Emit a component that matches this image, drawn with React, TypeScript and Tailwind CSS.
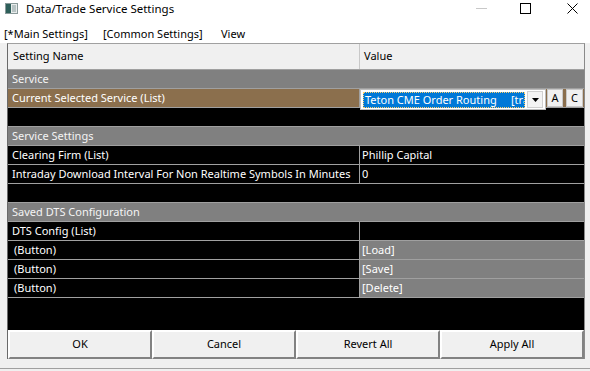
import React from "react";

const font = { fontFamily: '"Noto Sans", Lato, sans-serif' };

function Row({
  name,
  value,
  kind = "black",
  valueGray = false,
  indent = false,
  children,
}: {
  name?: string;
  value?: string;
  kind?: "black" | "section" | "brown" | "empty";
  valueGray?: boolean;
  indent?: boolean;
  children?: React.ReactNode;
}) {
  if (kind === "section") {
    return (
      <div className="h-[19px] bg-[#808080] border-b border-[#a0a0a0] text-[#f4f4f4] pl-[4px] leading-[18px]">
        {name}
      </div>
    );
  }
  if (kind === "empty") {
    return <div className="h-[19px] bg-black border-b border-[#a0a0a0]" />;
  }
  const bg = kind === "brown" ? "bg-[#8b6f4d]" : "bg-black";
  return (
    <div className={`relative h-[19px] flex border-b border-[#a0a0a0] ${bg} text-white leading-[18px]`}>
      <div className={`w-[352px] ${indent ? "pl-[6px]" : "pl-[4px]"} whitespace-nowrap overflow-hidden border-r border-[#a0a0a0]`}>{name}</div>
      <div className={`flex-1 pl-[2px] ${valueGray ? "bg-[#808080]" : ""}`}>{value}</div>
      {children}
    </div>
  );
}

function Btn({ label }: { label: string }) {
  return (
    <div className="flex-1 h-[29px] bg-[#f0f0f0] border-t-2 border-l-2 border-t-white border-l-white border-b-2 border-r-2 border-b-[#828282] border-r-[#828282] flex items-center justify-center text-black">
      {label}
    </div>
  );
}

export default function App() {
  return (
    <div className="w-[590px] h-[371px] bg-[#f0f0f0] overflow-hidden relative text-[11px]" style={font}>
      {/* title bar */}
      <div className="h-[26px] bg-white flex items-start pt-[1px] relative">
        <svg className="ml-[5px] mt-[2px]" width="13" height="11" viewBox="0 0 13 11">
          <rect x="0.5" y="0.5" width="12" height="10" fill="#e8ecec" stroke="#8a9a9a" />
          <rect x="1" y="1" width="5" height="9" fill="#2e5f5a" />
          <rect x="7" y="2" width="4" height="7" fill="#b8c4c4" />
        </svg>
        <span className="ml-[8px] text-[11.5px] leading-[16px] text-black">Data/Trade Service Settings</span>
        <svg className="absolute left-[476px] top-[8px]" width="11" height="2" viewBox="0 0 11 2">
          <line x1="0" y1="0.5" x2="11" y2="0.5" stroke="#c8c8c8" />
        </svg>
        <svg className="absolute left-[520px] top-[3px]" width="11" height="11" viewBox="0 0 11 11">
          <rect x="0.5" y="0.5" width="10" height="10" fill="none" stroke="#000" />
        </svg>
        <svg className="absolute left-[567px] top-[3px]" width="11" height="11" viewBox="0 0 11 11">
          <path d="M0.5 0.5 L10.5 10.5 M10.5 0.5 L0.5 10.5" stroke="#000" strokeWidth="1" />
        </svg>
      </div>
      {/* menu bar */}
      <div className="h-[17px] bg-white flex items-center text-black">
        <span className="ml-[4px] w-[99px]">[*Main Settings]</span>
        <span className="w-[118px]">[Common Settings]</span>
        <span>View</span>
      </div>
      {/* grid */}
      <div className="ml-[7px] w-[578px] border-l border-t border-r border-l-[#6a6a6a] border-t-[#a0a0a0] border-r-[#8a8a8a] bg-black">
        <div className="h-[26px] flex bg-[#f0f0f0] border-b border-[#a0a0a0] text-black items-center">
          <div className="w-[352px] pl-[5px] h-full flex items-center border-r border-[#c8c8c8]">Setting Name</div>
          <div className="flex-1 pl-[4px]">Value</div>
        </div>
        <Row kind="section" name="Service" />
        <Row kind="brown" name="Current Selected Service (List)" value="">
          <div className="absolute left-[352px] top-0 w-[186px] h-[21px] bg-white border border-[#bdbdbd] flex items-center pl-[2px] z-10">
            <div className="w-[162px] h-[16px] bg-[#0078d7] border border-dotted border-[#ffcf6a] text-white leading-[14px] whitespace-pre overflow-hidden pl-[1px]">
              {"Teton CME Order Routing     [trade]"}
            </div>
            <div className="ml-[2px] w-[16px] h-[17px] bg-[#f4f4f4] border border-[#d0d0d0] flex items-center justify-center">
              <svg width="7" height="4" viewBox="0 0 7 4"><path d="M0 0 H7 L3.5 4 Z" fill="#000" /></svg>
            </div>
          </div>
          <div className="absolute left-[539px] top-0 w-[16px] h-[18px] bg-[#f0f0f0] border border-[#c8c8c8] flex items-center justify-center text-black z-10">A</div>
          <div className="absolute left-[558px] top-0 w-[17px] h-[18px] bg-[#f0f0f0] border border-[#c8c8c8] flex items-center justify-center text-black z-10">C</div>
        </Row>
        <Row kind="empty" />
        <Row kind="section" name="Service Settings" />
        <Row name="Clearing Firm (List)" value="Phillip Capital" />
        <Row name="Intraday Download Interval For Non Realtime Symbols In Minutes" value="0" />
        <Row kind="empty" />
        <Row kind="section" name="Saved DTS Configuration" />
        <Row name="DTS Config (List)" value="" />
        <Row name="(Button)" value="[Load]" valueGray indent />
        <Row name="(Button)" value="[Save]" valueGray indent />
        <Row name="(Button)" value="[Delete]" valueGray indent />
        <div className="h-[32px] bg-black" />
        <div className="flex bg-[#f0f0f0]">
          <Btn label="OK" />
          <Btn label="Cancel" />
          <Btn label="Revert All" />
          <Btn label="Apply All" />
        </div>
      </div>
      <div className="absolute left-0 top-[368px] w-[590px] h-[1px] bg-[#a0a0a0]" />
    </div>
  );
}
